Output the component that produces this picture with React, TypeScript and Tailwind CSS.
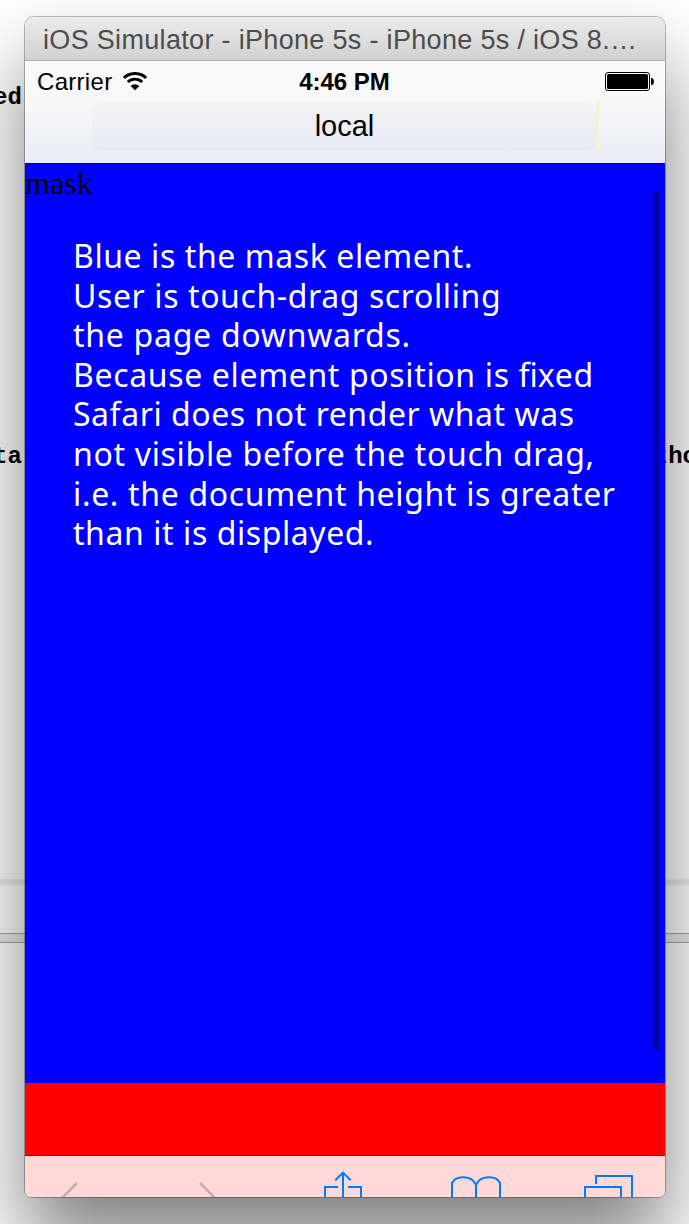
const note = [
  { text: 'Blue is the mask element.', tracking: 'tracking-[0.58px]' },
  { text: 'User is touch-drag scrolling', tracking: 'tracking-[0.6px]' },
  { text: 'the page downwards.', tracking: 'tracking-[0.73px]' },
  { text: 'Because element position is fixed', tracking: 'tracking-[0.65px]' },
  { text: 'Safari does not render what was', tracking: 'tracking-[0.54px]' },
  { text: 'not visible before the touch drag,', tracking: 'tracking-[0.68px]' },
  { text: 'i.e. the document height is greater', tracking: 'tracking-[0.66px]' },
  { text: 'than it is displayed.', tracking: 'tracking-[0.57px]' },
];

function NoteText({ text }: { text: string }) {
  const at = text.indexOf('fi');
  if (at < 0) return <>{text}</>;
  return (
    <>
      {text.slice(0, at)}
      <span className="tracking-normal">fi</span>
      {text.slice(at + 2)}
    </>
  );
}

function Desktop() {
  return (
    <div className="absolute inset-0 flex flex-col bg-white font-['Liberation_Mono'] text-[24px] leading-[30px] font-bold text-black">
      <div className="h-[83px]" />
      <div className="-ml-[7px] h-[30px]">ed</div>
      <div className="h-[329px]" />
      <div className="flex h-[30px] justify-between overflow-hidden">
        <span className="-ml-[7px]">ta.</span>
        <span className="-mr-[8px]">tho</span>
      </div>
      <div className="h-[407px]" />
      <div className="h-[6px] bg-[#ececec]" />
      <div className="h-[48px]" />
      <div className="h-[10px] border-y border-[#a6a6a6] bg-[#ececec]" />
    </div>
  );
}

function StatusBar() {
  return (
    <div className="flex h-[41px] items-center pr-[11px] pl-3 font-['Liberation_Sans'] text-[24px] leading-none text-black">
      <div className="flex flex-1 items-center gap-[10px]">
        <span className="tracking-[0.3px]">Carrier</span>
        <svg width="26" height="20" viewBox="0 0 26 20" fill="none" stroke="#000">
          <path d="M1.900 6a15.900 15.900 0 0 1 22.200 0" strokeWidth="3" />
          <path d="M5.800 10.100a10.400 10.400 0 0 1 14.400 0" strokeWidth="2.8" />
          <path d="M13 18.300 8.700 13.900a6.200 6.200 0 0 1 8.600 0Z" fill="#000" stroke="none" />
        </svg>
      </div>
      <span className="mr-[2px] font-bold">4:46 PM</span>
      <div className="flex flex-1 justify-end">
        <svg width="49" height="19" viewBox="0 0 49 19">
          <rect x=".5" y=".5" width="44" height="18" rx="2.5" fill="#fff" stroke="#000" />
          <rect x="2" y="2" width="41" height="15" rx="1.5" />
          <path d="M46 6h1q2 1 2 3.500T47 13h-1z" />
        </svg>
      </div>
    </div>
  );
}

function Toolbar() {
  return (
    <div className="h-[42px] overflow-hidden border-t border-[#a80000] bg-[#ffd8d8]">
      <svg width="640" height="41" viewBox="0 0 640 41" fill="none" stroke="#007aff" strokeWidth="2">
        <g stroke="#ccabae" strokeWidth="2.6">
          <path d="M52 27 36 43" />
          <path d="m175 27 16 16" />
        </g>
        <path d="M313 31h-13v12M323 31h13v12M318 43V17M310.300 24.300 318 16.600l7.700 7.700" />
        <path d="M427 43V27c4-8 20-8 24 2v14M451 29c4-10 20-10 24-2v16" />
        <path d="M560 43V31h36v12M571 28v-8h36v23" />
      </svg>
    </div>
  );
}

export default function App() {
  return (
    <div className="relative h-[1224px] w-[689px] overflow-hidden">
      <Desktop />
      <div className="relative pt-[17px] pl-[25px]">
        <div className="w-[640px] rounded-t-[9px] rounded-b-[7px] shadow-[0_0_0_1px_rgba(0,0,0,0.28),0_48px_82px_rgba(0,0,0,0.5)]">
          <div className="flex h-[1180px] w-[640px] flex-col overflow-hidden rounded-t-[9px] rounded-b-[6px]">
            <div className="h-[44px] shrink-0 border-t border-b border-t-[#f4f4f4] border-b-[#b0b0b0] bg-linear-to-b from-[#ebebeb] to-[#d1d1d1] pl-[18px] font-['Liberation_Sans'] text-[27px] leading-[45px] tracking-[0.32px] whitespace-nowrap text-[#4c4c4c]">
              iOS Simulator - iPhone 5s - iPhone 5s / iOS 8.…
            </div>
            <div className="flex h-[102px] shrink-0 flex-col bg-linear-to-b from-[#f9f9f9] from-35% to-[#ebebf8]">
              <StatusBar />
              <div className="flex pl-[67px]">
                <div className="h-[49px] w-[504px] rounded-[9px] bg-linear-to-b from-[#f4f4f5] to-[#e9e9f4] pl-px text-center font-['Liberation_Sans'] text-[29px] leading-[49px] text-black">
                  local
                </div>
                <div className="h-[50px] w-[3px] bg-[#f3f3d4]" />
              </div>
            </div>
            <div className="flex h-[920px] shrink-0 justify-between border-t border-[#0000b0] bg-[#0000ff]">
              <div>
                <div className="h-[72px] font-['Liberation_Serif'] text-[32px] leading-[39px] text-black">
                  mask
                </div>
                <div className="pl-[48px] font-['Noto_Sans'] text-[32px] leading-[39.6px] whitespace-nowrap text-white">
                  {note.map((line) => (
                    <p key={line.text} className={line.tracking}>
                      <NoteText text={line.text} />
                    </p>
                  ))}
                </div>
              </div>
              <div className="mt-[26px] mr-[6px] h-[861px] w-[5px] rounded-full bg-[#0000a6]" />
            </div>
            <div className="h-[72px] shrink-0 bg-[#ff0000]" />
            <Toolbar />
          </div>
        </div>
      </div>
    </div>
  );
}
